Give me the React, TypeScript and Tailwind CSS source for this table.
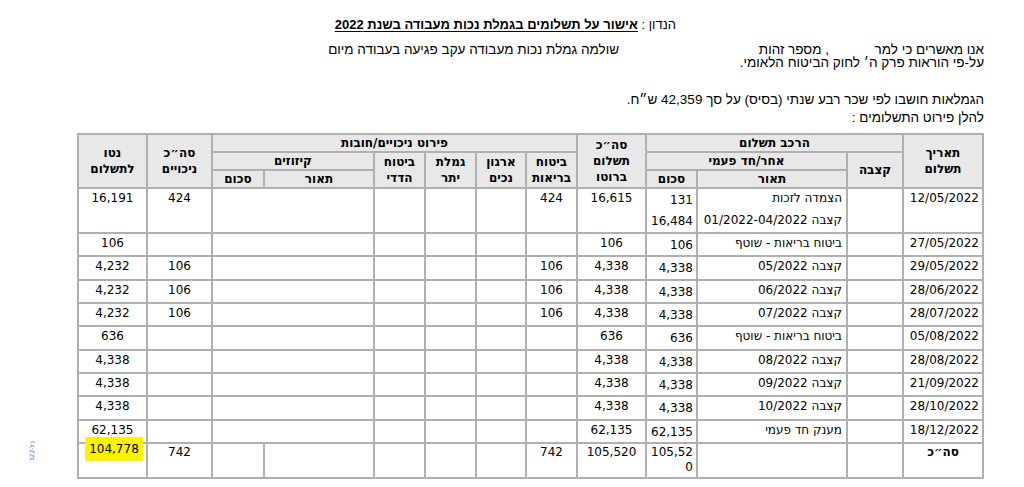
import React from "react";

type Row = {
  date: string;
  desc: string[];
  amt: string[];
  gross: string;
  health: string;
  totalDed: string;
  net: string;
};

const rows: Row[] = [
  { date: "12/05/2022", desc: ["הצמדה לזכות", "קצבה 01/2022-04/2022"], amt: ["131", "16,484"], gross: "16,615", health: "424", totalDed: "424", net: "16,191" },
  { date: "27/05/2022", desc: ["ביטוח בריאות - שוטף"], amt: ["106"], gross: "106", health: "", totalDed: "", net: "106" },
  { date: "29/05/2022", desc: ["קצבה 05/2022"], amt: ["4,338"], gross: "4,338", health: "106", totalDed: "106", net: "4,232" },
  { date: "28/06/2022", desc: ["קצבה 06/2022"], amt: ["4,338"], gross: "4,338", health: "106", totalDed: "106", net: "4,232" },
  { date: "28/07/2022", desc: ["קצבה 07/2022"], amt: ["4,338"], gross: "4,338", health: "106", totalDed: "106", net: "4,232" },
  { date: "05/08/2022", desc: ["ביטוח בריאות - שוטף"], amt: ["636"], gross: "636", health: "", totalDed: "", net: "636" },
  { date: "28/08/2022", desc: ["קצבה 08/2022"], amt: ["4,338"], gross: "4,338", health: "", totalDed: "", net: "4,338" },
  { date: "21/09/2022", desc: ["קצבה 09/2022"], amt: ["4,338"], gross: "4,338", health: "", totalDed: "", net: "4,338" },
  { date: "28/10/2022", desc: ["קצבה 10/2022"], amt: ["4,338"], gross: "4,338", health: "", totalDed: "", net: "4,338" },
  { date: "18/12/2022", desc: ["מענק חד פעמי"], amt: ["62,135"], gross: "62,135", health: "", totalDed: "", net: "62,135" },
];

const rowHeights = ["h-[45px]", "h-[23px]", "h-[24px]", "h-[23px]", "h-[23px]", "h-[24px]", "h-[23px]", "h-[23px]", "h-[24px]", "h-[23px]"];

const B = "border-2 border-[#b0b0b0] p-0";
const TH = "border-2 border-[#b0b0b0] p-0 bg-[#e8e8e8] font-bold text-center align-middle leading-[16px]";
const TD = "border-2 border-[#b0b0b0] p-0 align-top pt-[2px] leading-[15px]";

export default function App() {
  return (
    <div dir="rtl" className="relative w-[1024px] h-[487px] overflow-hidden bg-white text-black font-['Liberation_Sans',Arial,sans-serif]">
      <div className="pr-[40px] pl-[76px] pt-[17px] text-[13.5px]">
        <div className="pr-[308px] h-[16px] text-[13px] leading-[16px] whitespace-nowrap">
          <span>הנדון : </span>
          <span className="font-bold underline underline-offset-2">אישור על תשלומים בגמלת נכות מעבודה בשנת 2022</span>
        </div>
        <div className="mt-[10px] leading-[13px]">
          <div className="flex whitespace-nowrap">
            <span className="w-[155px] shrink-0">אנו מאשרים כי למר</span>
            <span className="w-[210px] shrink-0">, מספר זהות</span>
            <span>שולמה גמלת נכות מעבודה עקב פגיעה בעבודה מיום</span>
          </div>
          <div>על-פי הוראות פרק ה׳ לחוק הביטוח הלאומי.</div>
        </div>
        <div className="mt-[24px] leading-[13px]">הגמלאות חושבו לפי שכר רבע שנתי (בסיס) על סך 42,359 ש״ח.</div>
        <div className="mt-[5px] leading-[13px]">להלן פירוט התשלומים :</div>

        <table className="mt-[9px] w-[905px] table-fixed border-collapse text-[12px] font-['DejaVu_Sans',sans-serif]">
          <colgroup>
            <col className="w-[80px]" />
            <col className="w-[56px]" />
            <col className="w-[150px]" />
            <col className="w-[51px]" />
            <col className="w-[69px]" />
            <col className="w-[51px]" />
            <col className="w-[50px]" />
            <col className="w-[51px]" />
            <col className="w-[51px]" />
            <col className="w-[110px]" />
            <col className="w-[52px]" />
            <col className="w-[65px]" />
            <col className="w-[69px]" />
          </colgroup>
          <thead>
            <tr className="h-[17px]">
              <th rowSpan={3} className={TH}>תאריך<br />תשלום</th>
              <th colSpan={3} className={TH}>הרכב תשלום</th>
              <th rowSpan={3} className={TH}>סה״כ<br />תשלום<br />ברוטו</th>
              <th colSpan={6} className={TH}>פירוט ניכויים/חובות</th>
              <th rowSpan={3} className={TH}>סה״כ<br />ניכויים</th>
              <th rowSpan={3} className={TH}>נטו<br />לתשלום</th>
            </tr>
            <tr className="h-[16px]">
              <th rowSpan={2} className={TH}>קצבה</th>
              <th colSpan={2} className={TH}>אחר/חד פעמי</th>
              <th rowSpan={2} className={TH}>ביטוח<br />בריאות</th>
              <th rowSpan={2} className={TH}>ארגון<br />נכים</th>
              <th rowSpan={2} className={TH}>גמלת<br />יתר</th>
              <th rowSpan={2} className={TH}>ביטוח<br />הדדי</th>
              <th colSpan={2} className={TH}>קיזוזים</th>
            </tr>
            <tr className="h-[18px]">
              <th className={TH}>תאור</th>
              <th className={TH}>סכום</th>
              <th className={TH}>תאור</th>
              <th className={TH}>סכום</th>
            </tr>
          </thead>
          <tbody>
            {rows.map((r, i) => (
              <tr key={r.date} className={rowHeights[i]}>
                <td className={TD + " text-right pr-[3px]"}>{r.date}</td>
                <td className={TD}></td>
                <td className={TD + " text-right pr-[4px]"}>
                  {r.desc.map((d, j) => (
                    <div key={j} className={j > 0 ? "mt-[7px]" : ""}>{d}</div>
                  ))}
                </td>
                <td className={B + " align-top pt-[4px] leading-[15px] text-right pr-[3px]"}>
                  {r.amt.map((d, j) => (
                    <div key={j} className={j > 0 ? "mt-[6px]" : ""}>{d}</div>
                  ))}
                </td>
                <td className={TD + " text-center"}>{r.gross}</td>
                <td className={TD + " text-center"}>{r.health}</td>
                <td className={TD}></td>
                <td className={TD}></td>
                <td className={TD}></td>
                <td colSpan={2} className={TD}></td>
                <td className={TD + " text-center"}>{r.totalDed}</td>
                <td className={TD + " text-center"}>{r.net}</td>
              </tr>
            ))}
            <tr className="h-[35px]">
              <td className={B + " align-top pt-[1px] leading-[15px] text-center font-bold"}>סה״כ</td>
              <td className={B}></td>
              <td className={B}></td>
              <td className={B + " align-top pt-[1px] leading-[15px] text-right pr-[3px]"}>105,52<br />0</td>
              <td className={B + " align-top pt-[1px] leading-[15px] text-center"}>105,520</td>
              <td className={B + " align-top pt-[1px] leading-[15px] text-center"}>742</td>
              <td className={B}></td>
              <td className={B}></td>
              <td className={B}></td>
              <td className={B}></td>
              <td className={B}></td>
              <td className={B + " align-top pt-[1px] leading-[15px] text-center"}>742</td>
              <td className={B + " relative"}>
                <span className="absolute left-[6px] top-[-7px] z-10 flex h-[24px] w-[58px] items-center justify-center bg-[#fff200]">104,778</span>
              </td>
            </tr>
          </tbody>
        </table>
      </div>
      <span className="absolute left-[22px] top-[448px] -rotate-90 text-[6px] leading-[6px] text-[#5b6b9b] font-['DejaVu_Sans',sans-serif]">בל-322</span>
    </div>
  );
}
